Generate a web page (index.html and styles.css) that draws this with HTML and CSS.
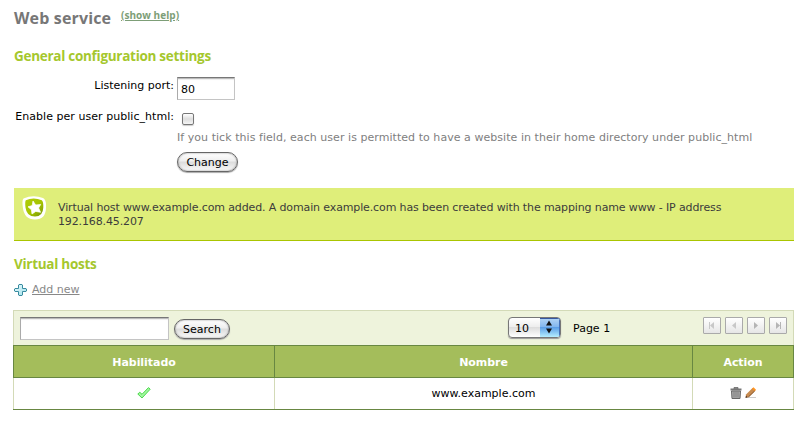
FILE: index.html
```html
<!DOCTYPE html>
<html lang="en">
<head>
<meta charset="utf-8">
<title>Web service</title>
<link rel="stylesheet" href="styles.css">
</head>
<body>
<main class="page">
  <header class="page-head"><h1>Web service</h1><a class="help">(show help)</a></header>

  <h2 class="general-title">General configuration settings</h2>
  <form class="settings">
    <label class="port-label" for="port">Listening port:</label>
    <input id="port" class="field port" type="text" value="80">
    <label class="public-label" for="public">Enable per user public_html:</label>
    <div class="public">
      <input id="public" class="check" type="checkbox">
      <p class="hint">If you tick this field, each user is permitted to have a website in their home directory under public_html</p>
    </div>
    <button class="btn change" type="button">Change</button>
  </form>

  <div class="note">
    <svg class="badge" width="26" height="26" viewBox="0 0 26 26">
      <defs><linearGradient id="shield" x1="0" y1="0" x2="1" y2="1"><stop offset="0" stop-color="#b0cc09"/><stop offset=".55" stop-color="#a5c400"/><stop offset="1" stop-color="#739208"/></linearGradient></defs>
      <path d="M1.500 3.500Q11-.5 21 3Q24.500 5 24 12Q24 24.500 13 24.500Q2 24.500 .8 12Q-.2 5 1.500 3.500Z" fill="#fff"/>
      <path d="M3.800 5.200Q11.500 2 19.800 5.200Q21.500 6.500 21.300 12.500Q21 21.500 13 21.500Q4.500 21.500 3.500 12.500Q2.800 6.500 3.800 5.200Z" fill="url(#shield)"/>
      <path d="M11 6L13.700 10L18.700 9.400L16.600 13L18.600 17.300L13.700 16.400L10 19L9.400 14.700L6 11.800L10.200 10.600Z" fill="#fff" stroke="#fff" stroke-width=".7" stroke-linejoin="round"/>
    </svg>
    <p>Virtual host www.example.com added. A domain example.com has been created with the mapping name www - IP address 192.168.45.207</p>
  </div>

  <h2 class="hosts-title">Virtual hosts</h2>
  <div class="add">
    <svg width="14" height="14" viewBox="0 0 14 14"><defs><linearGradient id="plus" x1="0" y1="0" x2="1" y2="1"><stop stop-color="#e8fbff"/><stop offset="1" stop-color="#a0dfe9"/></linearGradient></defs><path d="M6 1.500H9L9.500 2V5.500H13L13.500 6V8L13 8.500H9.500V12L9 12.500H6L5.500 12V8.500H2L1.500 8V6L2 5.500H5.500V2Z" fill="url(#plus)" stroke="#398b9f"/></svg>
    <a>Add new</a>
  </div>

  <section class="hosts">
    <div class="toolbar">
      <input class="field search" type="text" aria-label="Search">
      <button class="btn search-btn" type="button">Search</button>
      <div class="select"><span class="value">10</span><span class="arrows"><svg width="17" height="19" viewBox="0 0 17 19"><path d="M9 2.500L12 7.500H6ZM9 15.500L6 10.500H12Z" fill="#111"/></svg></span></div>
      <span class="pageno">Page 1</span>
      <nav class="pager">
        <span><svg width="16" height="15" viewBox="0 0 16 15"><path d="M5 4H6V11H5ZM10 4V11L6 7.500Z" fill="#c8c8c8"/></svg></span>
        <span><svg width="16" height="15" viewBox="0 0 16 15"><path d="M10 4V11L6 7.500Z" fill="#c8c8c8"/></svg></span>
        <span><svg width="16" height="15" viewBox="0 0 16 15"><path d="M6 4V11L10 7.500Z" fill="#b5b5b5"/></svg></span>
        <span><svg width="16" height="15" viewBox="0 0 16 15"><path d="M10 4H11V11H10ZM6 4V11L10 7.500Z" fill="#b5b5b5"/></svg></span>
      </nav>
    </div>
    <div class="row head"><div>Habilitado</div><div>Nombre</div><div>Action</div></div>
    <div class="row">
      <div><svg class="tick" width="14" height="12" viewBox="0 0 14 12"><path d="M.8 7L2.800 5.300L5 7.300L11.500 .6L13.200 2.200L5 11Z" fill="#a2f7a0" stroke="#4bd84b" stroke-width="1"/></svg></div>
      <div>www.example.com</div>
      <div class="actions">
        <svg width="12" height="12" viewBox="0 0 12 12"><path d="M4 .5H8V2H4Z" fill="#aaa" stroke="#666" stroke-width=".8"/><path d="M.5 1.500H11.500V3.500H.5Z" fill="#777"/><path d="M1.500 4H10.500L10 11.500H2Z" fill="#aaa" stroke="#666"/><path d="M4 4.500V10.500M6 4.500V10.500M8 4.500V10.500" stroke="#808080"/></svg>
        <svg width="12" height="12" viewBox="0 0 12 12"><path d="M1 10.500H11" stroke="#ccc"/><path d="M1 7.500L7.500 1L10.500 3.500L4 10L.7 10.700Z" fill="#c78b50"/><path d="M7 1.500L8.500 .3L11 2.700L9.700 4.200Z" fill="#ff9420"/><path d="M3.500 9.800L9.700 4" stroke="#875a35"/><path d="M.5 11L1 8.500L2.700 10.300Z" fill="#523726"/></svg>
      </div>
    </div>
  </section>
</main>
</body>
</html>
```
FILE: styles.css
```css
* { box-sizing: border-box; }
body { margin: 0; background: #fff; color: #000; font: 11px/14px "DejaVu Sans", Verdana, sans-serif; }
h1, h2, p { margin: 0; }
svg { display: block; flex: none; }
.page { width: 781px; margin-left: 13px; }
.page-head { display: flex; align-items: flex-start; height: 47px; padding: 8px 0 0 1px; gap: 11px; }
h1, h2, .help { font-family: "Trebuchet MS", "Open Sans", sans-serif; font-weight: 700; white-space: nowrap; }
h1 { width: 96px; font-size: 16px; line-height: 20px; color: #777; letter-spacing: .15px; }
.help { font-size: 10px; line-height: 14px; color: #7d9e77; text-decoration: underline; font-weight: 700; letter-spacing: .05px; }
h2 { padding-left: 1px; font-size: 13.5px; line-height: 18px; color: #a5c72d; letter-spacing: -.28px; }
.settings { display: grid; grid-template-columns: 161px 1fr; grid-template-rows: 31px 43px 21px; column-gap: 3px; margin-top: 12px; height: 111px; }
.settings label { text-align: right; white-space: nowrap; padding-top: 2px; }
.public-label { letter-spacing: .04px; }
.field { border: 1px solid #c4c4c4; border-top-color: #777; border-left-color: #aaa; background: #fff; box-shadow: inset 0 1px #bbb, inset 0 2px 1px #eee; font: inherit; padding: 2px 3px 0; margin: 0; color: #000; outline: 0; }
.port { width: 58px; height: 23px; }
.public { padding-top: 5px; }
.check { appearance: none; display: block; width: 12px; height: 12px; margin: 0 0 0 5px; border: 1px solid #777; border-radius: 2px; background: linear-gradient(#fff, #ddd 50%, #f5f5f5); box-shadow: 0 1px 1px #ccc; }
.hint { margin-top: 6px; color: #808080; white-space: nowrap; letter-spacing: .048px; }
.btn { border: 1px solid #666; border-radius: 11px; background: linear-gradient(#fff, #eee 45%, #dcdcdc 50%, #fafafa); box-shadow: inset 0 0 2px #888, 0 1px 1px #aaa; font: inherit; color: #000; padding: 1px 0 0; height: 20px; text-align: center; }
.change { grid-column: 2; width: 61px; margin-top: 1px; }
.note { display: flex; align-items: flex-start; margin-left: 1px; height: 53px; background: #dfee7a; border-bottom: 1px solid #aac500; padding: 7px 60px 0 8px; color: #3c3c3c; }
.badge { margin-right: 10px; }
.note p { padding-top: 6px; letter-spacing: -.13px; }
.hosts-title { margin-top: 14px; }
.add { display: flex; align-items: center; gap: 5px; margin-top: 10px; height: 14px; color: #888; }
.add a { text-decoration: underline; }
.hosts { margin-top: 13px; }
.toolbar { display: flex; height: 35px; padding: 6px 6px 0; border: 1px solid #d3dab7; border-bottom: 0; background: #eef3dc; }
.search { width: 149px; height: 23px; }
.search-btn { width: 56px; margin: 2px 0 0 5px; }
.select { display: flex; width: 53px; height: 21px; margin-left: 278px; border: 1px solid #777; border-radius: 4px; background: linear-gradient(#fff, #eee 45%, #ddd 50%, #fff); box-shadow: 0 1px 1px #999; overflow: hidden; }
.value { width: 32px; padding: 4px 0 0 6px; }
.arrows { width: 20px; background: linear-gradient(#b5d6f5, #80b5ee 48%, #5c9fe7 50%, #b5eeff); box-shadow: inset 0 1px #3658a0, inset -1px 0 #426eb5; }
.pageno { margin: 5px 0 0 12px; }
.pager { display: flex; gap: 4px; margin-left: auto; }
.pager span { width: 18px; height: 17px; border: 1px solid #aaa; border-radius: 1px; background: linear-gradient(#fff, #e6e6e6); }
.row { display: grid; grid-template-columns: 262px 418px 101px; height: 32px; border-bottom: 1px solid #688742; }
.row > div { display: flex; align-items: center; justify-content: center; border-right: 1px solid #d3dab7; padding-top: 1px; }
.row > div:first-child { border-left: 1px solid #d3dab7; }
.row.head { height: 33px; border-top: 1px solid #688742; background: #a4bd5b; color: #fff; font-weight: 700; }
.row.head > div { border-color: #688742; padding-top: 2px; letter-spacing: -.05px; }
.row .tick { margin-top: -2px; }
.row .actions { gap: 3px; padding: 0 0 2px; }
```
